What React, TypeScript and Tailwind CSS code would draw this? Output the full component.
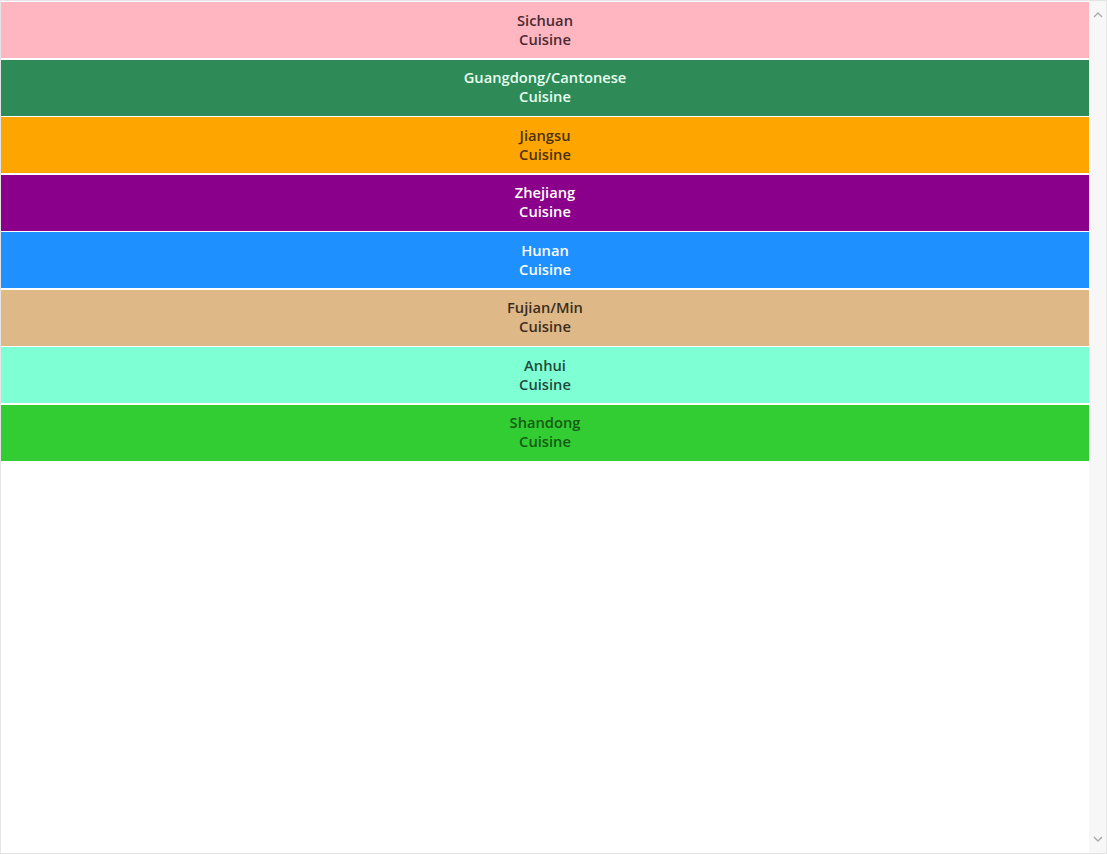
const cuisines = [
  { name: "Sichuan", bg: "bg-[#ffb6c1]", text: "text-[#4a2a33]" },
  { name: "Guangdong/Cantonese", bg: "bg-[#2e8b57]", text: "text-[#e8fff0]" },
  { name: "Jiangsu", bg: "bg-[#ffa500]", text: "text-[#4a3210]" },
  { name: "Zhejiang", bg: "bg-[#8b008b]", text: "text-white" },
  { name: "Hunan", bg: "bg-[#1e90ff]", text: "text-white" },
  { name: "Fujian/Min", bg: "bg-[#deb887]", text: "text-[#3a2e20]" },
  { name: "Anhui", bg: "bg-[#7fffd4]", text: "text-[#1f4a3c]" },
  { name: "Shandong", bg: "bg-[#32cd32]", text: "text-[#145c14]" },
];

export default function App() {
  return (
    <div className="flex h-[854px] w-full border border-[#e4e4e4] bg-white font-['Open_Sans',sans-serif]">
      {/* list */}
      <div className="flex flex-1 flex-col gap-[1.5px] pt-[1px]">
        {cuisines.map((c) => (
          <div
            key={c.name}
            className={`flex h-[56px] flex-col items-center justify-center pb-[1px] text-[14.7px] font-semibold leading-[19px] ${c.bg} ${c.text}`}
          >
            <span>{c.name}</span>
            <span>Cuisine</span>
          </div>
        ))}
      </div>

      {/* scrollbar */}
      <div className="flex w-[17px] flex-col items-center justify-between bg-[#f7f7f7] py-[10px]">
        <svg width="10" height="7" viewBox="0 0 10 7" fill="none" stroke="#a8a8a8" strokeWidth="1.3">
          <path d="M1 6 L5 2 L9 6" />
        </svg>
        <svg width="10" height="7" viewBox="0 0 10 7" fill="none" stroke="#a8a8a8" strokeWidth="1.3">
          <path d="M1 1 L5 5 L9 1" />
        </svg>
      </div>
    </div>
  );
}
